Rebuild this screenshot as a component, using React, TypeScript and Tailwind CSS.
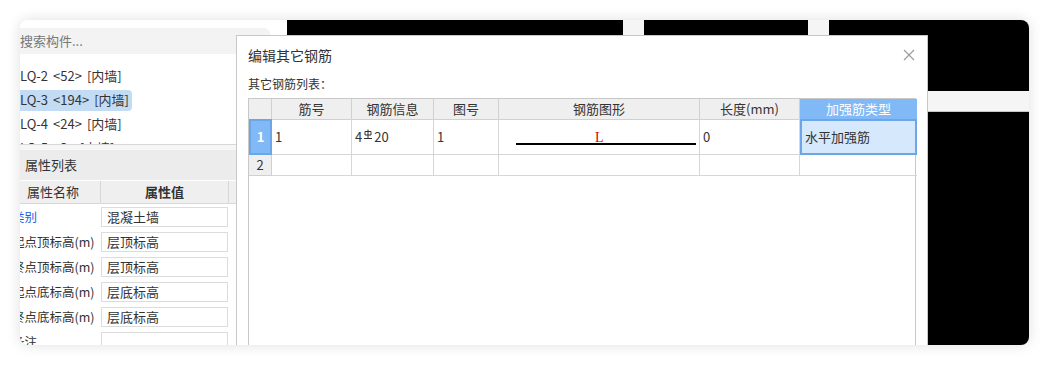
import React from 'react';

const font = "font-['Noto_Sans_CJK_SC','Noto_Sans',sans-serif]";

const listItems = [
  { code: 'LQ-2', count: '<52>', kind: '[内墙]', active: false },
  { code: 'LQ-3', count: '<194>', kind: '[内墙]', active: true },
  { code: 'LQ-4', count: '<24>', kind: '[内墙]', active: false },
  { code: 'LQ-5', count: '<3>', kind: '[内墙]', active: false },
];

const props = [
  { label: '类别', value: '混凝土墙', link: true },
  { label: '起点顶标高(m)', value: '层顶标高' },
  { label: '终点顶标高(m)', value: '层顶标高' },
  { label: '起点底标高(m)', value: '层底标高' },
  { label: '终点底标高(m)', value: '层底标高' },
  { label: '备注', value: '' },
];

const cols = 'grid grid-cols-[23px_80px_82px_65px_201px_100px_117px]';

function RebarMark() {
  // HRB400 grade symbol
  return (
    <svg width="10" height="11" viewBox="0 0 10 11" className="mb-[5px] mx-[1px]">
      <path d="M2 2.5h6v3.5h-6z" fill="none" stroke="#333" strokeWidth="1" />
      <path d="M5 0.5v9M1 9.5h8" stroke="#333" strokeWidth="1" />
    </svg>
  );
}

function LeftPanel() {
  return (
    <div className="w-[267px] h-full bg-white flex flex-col shrink-0 overflow-hidden">
      <div className="mt-2 h-[26px] w-[250px] shrink-0 rounded-r-md bg-[#f3f3f3] flex items-center text-[13px] text-[#777]">
        搜索构件...
      </div>
      <div className="h-[91px] shrink-0 pt-[10px] overflow-hidden border-b border-[#d8d8d8]">
        {listItems.map((it) => (
          <div key={it.code} className="h-6 flex items-center">
            <span
              className={`h-[21px] flex items-center gap-[5px] pr-[3px] text-[13px] text-[#333] ${
                it.active ? 'bg-[#c4dcf3] rounded-r-sm' : ''
              }`}
            >
              <span>{it.code}</span>
              <span>{it.count}</span>
              <span>{it.kind}</span>
            </span>
          </div>
        ))}
      </div>
      <div className="h-[5px] shrink-0 bg-[#f6f6f6]" />
      <div className="h-[30px] shrink-0 bg-[#ececec] flex items-center pl-[5px] text-[13px] text-[#333]">属性列表</div>
      <div className="h-px shrink-0 bg-white" />
      <div className="h-[23px] shrink-0 bg-[#efefef] border-b border-[#d8d8d8] flex text-[13px] text-[#333]">
        <div className="w-[80px] flex items-center pl-[7px]">属性名称</div>
        <div className="w-[128px] border-l border-[#d8d8d8] flex items-center justify-center font-bold">属性值</div>
        <div className="flex-1 border-l border-[#d8d8d8]" />
      </div>
      {props.map((p) => (
        <div key={p.label} className="h-[25px] shrink-0 flex items-center text-[13px]">
          <div className="w-[81px] overflow-visible">
            <span className={`ml-[-8px] whitespace-nowrap text-[12.5px] ${p.link ? 'text-[#1e5ee6]' : 'text-[#333]'}`}>
              {p.label}
            </span>
          </div>
          <div className="w-[127px] h-[20px] border border-[#dcdcdc] bg-white flex items-center pl-[5px] text-[#333]">
            {p.value}
          </div>
        </div>
      ))}
    </div>
  );
}

function Canvas() {
  return (
    <div className="flex-1 flex h-full">
      <div className="w-[336px] bg-black" />
      <div className="w-[21px] bg-[#f5f5f5]" />
      <div className="w-[164px] bg-black" />
      <div className="w-[21px] bg-[#f5f5f5]" />
      <div className="flex-1 flex flex-col">
        <div className="h-[71px] bg-black" />
        <div className="h-[21px] bg-[#f5f5f5] border-b border-[#c8c8c8]" />
        <div className="flex-1 bg-black" />
      </div>
    </div>
  );
}

function Dialog() {
  const head = 'flex items-center justify-center border-r border-b border-[#d0d0d0] text-[13px] text-[#333] bg-[#efefef]';
  const cell = 'flex items-center border-r border-b border-[#d6d6d6] text-[13px] text-[#333] pl-[3px]';
  return (
    <div className="absolute left-[216px] top-[15px] w-[692px] h-[330px] bg-white border border-[#c8c8c8] flex flex-col">
      <div className="h-[38px] shrink-0 flex items-center justify-between pl-[11px] pr-[12px]">
        <span className="text-[14px] text-[#333]">编辑其它钢筋</span>
        <svg width="12" height="12" viewBox="0 0 12 12">
          <path d="M1 1l10 10M11 1L1 11" stroke="#9a9a9a" strokeWidth="1.1" />
        </svg>
      </div>
      <div className="h-[20px] shrink-0 flex items-center pl-[11px] text-[12px] text-[#333]">其它钢筋列表：</div>
      <div className="mt-[4px] ml-[11px] w-[668px] flex-1 border-l border-r border-t border-[#c8c8c8] flex flex-col">
        <div className={`${cols} h-[20px]`}>
          <div className={head} />
          <div className={head}>筋号</div>
          <div className={head}>钢筋信息</div>
          <div className={head}>图号</div>
          <div className={head}>钢筋图形</div>
          <div className={head}>长度(mm)</div>
          <div className="flex items-center justify-center border-b border-[#6aa6e8] bg-[#80b9f6] text-[13px] text-white">
            加强筋类型
          </div>
        </div>
        <div className={`${cols} h-[36px]`}>
          <div className="flex items-center justify-center bg-[#80b9f6] border-2 border-[#6aa6e8] text-[13px] font-bold text-white">1</div>
          <div className={cell}>1</div>
          <div className={cell}>
            <span>4</span>
            <RebarMark />
            <span>20</span>
          </div>
          <div className={cell}>1</div>
          <div className="border-r border-b border-[#d6d6d6]">
            <svg width="200" height="35" viewBox="0 0 200 35">
              <line x1="17" y1="25" x2="197" y2="25" stroke="#000" strokeWidth="2" />
              <text x="96" y="23" fill="#e00000" fontSize="14" fontFamily="Liberation Serif, serif">L</text>
            </svg>
          </div>
          <div className={cell}>0</div>
          <div className="flex items-center pl-[3px] bg-[#d5e8fc] border-2 border-[#6aa6e8] text-[13px] text-[#333]">水平加强筋</div>
        </div>
        <div className={`${cols} h-[21px]`}>
          <div className={`${head} text-[13px]`}>2</div>
          <div className={cell} />
          <div className={cell} />
          <div className={cell} />
          <div className={cell} />
          <div className={cell} />
          <div className="border-b border-[#d6d6d6]" />
        </div>
        <div className="flex-1" />
      </div>
    </div>
  );
}

export default function App() {
  return (
    <div className={`w-[1049px] h-[365px] bg-white p-5 ${font}`}>
      <div className="relative w-[1009px] h-[325px] rounded-lg overflow-hidden bg-white shadow-[0_0_14px_rgba(0,0,0,0.13)] flex">
        <LeftPanel />
        <Canvas />
        <Dialog />
      </div>
    </div>
  );
}
